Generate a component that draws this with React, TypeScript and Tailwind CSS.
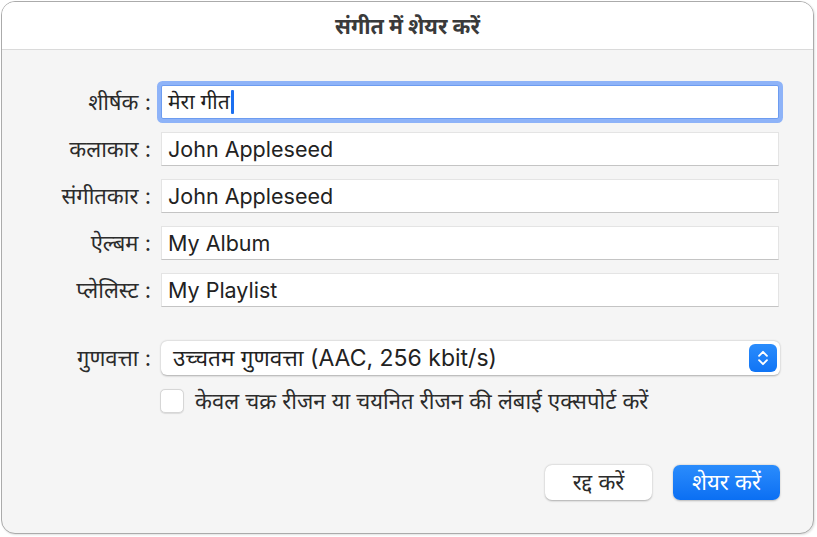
const FONT = "font-['Inter','Noto_Sans','Noto_Sans_Devanagari',sans-serif]";

type Field = { label: string; value: string; focused?: boolean };

const FIELDS: Field[] = [
  { label: "शीर्षक :", value: "मेरा गीत", focused: true },
  { label: "कलाकार :", value: "John Appleseed" },
  { label: "संगीतकार :", value: "John Appleseed" },
  { label: "ऐल्बम :", value: "My Album" },
  { label: "प्लेलिस्ट :", value: "My Playlist" },
];

function TextField({ value, focused }: { value: string; focused?: boolean }) {
  if (focused) {
    return (
      <div className="flex h-[34px] items-center rounded-[2px] border border-[#6d9cf0] bg-white pl-[6px] text-[21px] text-[#222] ring-4 ring-[#8eb3f8]">
        <span>{value}</span>
        <span className="ml-[1px] h-[24px] w-[3px] rounded-[1px] bg-[#1b6ff0]" />
      </div>
    );
  }
  return (
    <div className="flex h-[34px] items-center border border-[#e4e4e4] border-b-[#c4c4c4] bg-white pl-[6px] text-[21.5px] text-[#222]">
      {value}
    </div>
  );
}

export default function App() {
  return (
    <div className={`h-[537px] w-[817px] bg-white pl-[1px] pt-[1px] ${FONT}`}>
      <div className="flex h-[533px] w-[813px] flex-col overflow-hidden rounded-[14px] border border-[#ababab] bg-[#f5f5f5] shadow-[1px_1px_2px_rgba(0,0,0,0.12)]">
        <div className="flex h-[48px] flex-none items-center justify-center border-b border-[#dadada] bg-white pt-[2px] text-[21.5px] font-bold text-[#3a3a3a]">
          संगीत में शेयर करें
        </div>

        <div className="flex flex-1 flex-col pt-[35px]">
          <div className="grid grid-cols-[149px_618px] gap-x-[10px] gap-y-[13px]">
            {FIELDS.map((f) => (
              <div key={f.label} className="contents">
                <div className="flex h-[34px] items-center justify-end text-[22px] text-[#2c2c2c]">
                  {f.label}
                </div>
                <TextField value={f.value} focused={f.focused} />
              </div>
            ))}
          </div>

          <div className="mt-[34px] grid grid-cols-[149px_619px] gap-x-[10px]">
            <div className="flex h-[34px] items-center justify-end text-[22px] text-[#2c2c2c]">
              गुणवत्ता :
            </div>
            <div className="flex h-[34px] items-center justify-between rounded-[6px] bg-white pl-[12px] pr-[3px] text-[23px] text-[#222] shadow-[0_0.5px_2px_rgba(0,0,0,0.3)]">
              <span>
                <span className="text-[22.5px]">उच्चतम गुणवत्ता</span> (AAC, 256 kbit/s)
              </span>
              <span className="flex h-[28px] w-[28px] items-center justify-center rounded-[6px] bg-gradient-to-b from-[#2a8cfc] to-[#0f74f5]">
                <svg viewBox="0 0 16 20" className="h-[18px] w-[14px]" fill="none" stroke="white" strokeWidth={2.2} strokeLinecap="round" strokeLinejoin="round">
                  <path d="M3.5 7.5 8 3l4.5 4.5" />
                  <path d="M3.5 12.5 8 17l4.5-4.5" />
                </svg>
              </span>
            </div>
          </div>

          <div className="ml-[158px] mt-[14px] flex items-center gap-[11px]">
            <span className="h-[24px] w-[24px] flex-none rounded-[5px] border border-[#d6d6d6] bg-white shadow-[0_0.5px_1px_rgba(0,0,0,0.1)]" />
            <span className="text-[22px] leading-[24px] text-[#2c2c2c]">
              केवल चक्र रीजन या चयनित रीजन की लंबाई एक्सपोर्ट करें
            </span>
          </div>

          <div className="ml-[543px] mt-[52px] flex gap-[21px]">
            <button className="flex h-[35px] w-[107px] items-center justify-center rounded-[7px] bg-white text-[22px] text-[#2c2c2c] shadow-[0_0.5px_2px_rgba(0,0,0,0.3)]">
              रद्द करें
            </button>
            <button className="flex h-[35px] w-[107px] items-center justify-center rounded-[7px] bg-gradient-to-b from-[#2a8cfc] to-[#0a6ff3] text-[22px] text-white shadow-[0_0.5px_2px_rgba(0,0,0,0.25)]">
              शेयर करें
            </button>
          </div>
        </div>
      </div>
    </div>
  );
}
